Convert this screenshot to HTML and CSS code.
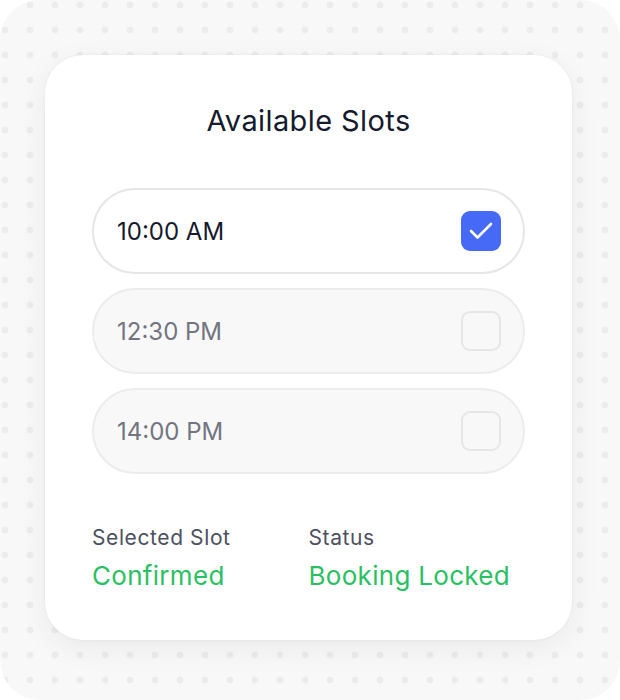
FILE: index.html
```html
<!DOCTYPE html>
<html lang="en">
<head>
    <meta charset="UTF-8">
    <meta name="viewport" content="width=device-width, initial-scale=1.0">
    <title>Available Slots</title>
    <link rel="stylesheet" href="styles.css">
</head>
<body>

    <div class="frame">
        <div class="card">
            <h1>Available Slots</h1>

            <div class="slots">
                <div class="slot active">
                    <span>10:00 AM</span>
                    <span class="check checked">
                        <svg viewBox="0 0 40 40" width="40" height="40">
                            <path d="M10 20 L16.5 26.5 L30 13" fill="none" stroke="#fff" stroke-width="2.6" stroke-linecap="round" stroke-linejoin="round"/>
                        </svg>
                    </span>
                </div>
                <div class="slot">
                    <span>12:30 PM</span>
                    <span class="check"></span>
                </div>
                <div class="slot">
                    <span>14:00 PM</span>
                    <span class="check"></span>
                </div>
            </div>

            <div class="summary">
                <div>
                    <p class="label">Selected Slot</p>
                    <p class="value">Confirmed</p>
                </div>
                <div>
                    <p class="label">Status</p>
                    <p class="value">Booking Locked</p>
                </div>
            </div>
        </div>
    </div>

</body>
</html>
```

FILE: styles.css
```css
body {
    margin: 0;
    background-color: #ffffff;
    font-family: "Inter", "Lato", sans-serif;
}

.frame {
    width: 620px;
    height: 700px;
    box-sizing: border-box;
    padding: 55px 48px 0 45px;
    border-radius: 40px;
    background-color: #f8f8f8;
    background-image: radial-gradient(circle at 5px 5px, #ececec 3.2px, transparent 3.8px);
    background-size: 25px 25px;
}

.card {
    height: 585px;
    box-sizing: border-box;
    padding: 44px 47px 0 47px;
    background-color: white;
    border-radius: 38px;
    box-shadow: 0 0 3px rgba(0, 0, 0, 0.06), 0 8px 30px rgba(0, 0, 0, 0.06);
}

h1 {
    margin: 0 0 45px 0;
    text-align: center;
    font-size: 29px;
    font-weight: 400;
    color: #151a2d;
    line-height: 44px;
    letter-spacing: 0.4px;
}

.slots {
    display: flex;
    flex-direction: column;
    gap: 14px;
}

.slot {
    height: 86px;
    box-sizing: border-box;
    display: flex;
    align-items: center;
    justify-content: space-between;
    padding: 0 22px 0 23px;
    border: 2px solid #ececec;
    border-radius: 43px;
    background-color: #f8f8f8;
    font-size: 24px;
    color: #72757f;
}

.slot.active {
    background-color: white;
    border-color: #e6e6e6;
    color: #151a2d;
}

.check {
    width: 40px;
    height: 40px;
    box-sizing: border-box;
    border: 2px solid #e6e6e6;
    border-radius: 9px;
}

.check.checked {
    border: none;
    background-color: #4669f6;
}

.check svg {
    display: block;
}

.summary {
    display: grid;
    grid-template-columns: 1fr 1fr;
    margin-top: 49px;
}

.summary p {
    margin: 0;
}

.summary .label {
    font-size: 21px;
    color: #4d5060;
    line-height: 30px;
    letter-spacing: 0.6px;
}

.summary .value {
    font-size: 26px;
    color: #2bbf63;
    line-height: 36px;
    margin-top: 5px;
    letter-spacing: 0.3px;
}
```
